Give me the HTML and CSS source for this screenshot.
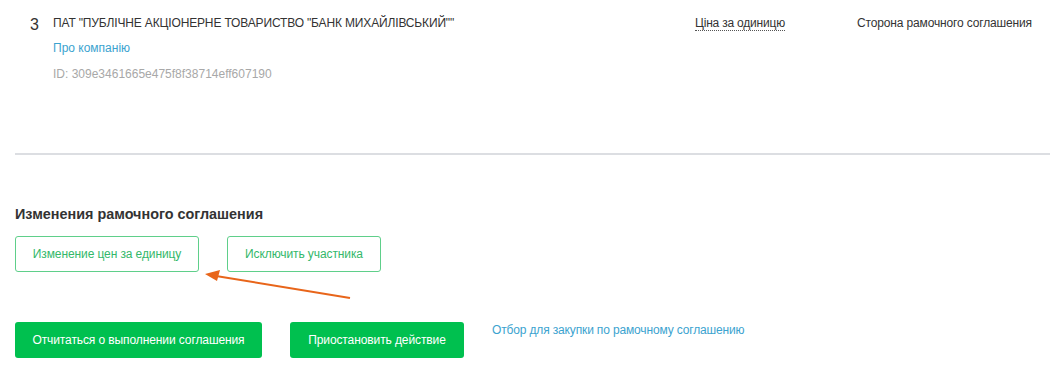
FILE: index.html
```html
<!doctype html>
<html lang="ru">
<head>
    <meta charset="UTF-8">
    <title>Рамочное соглашение</title>
    <link rel="stylesheet" href="styles.css">
</head>
<body>
<div class="page">
    <div class="party">
        <div class="num">3</div>
        <div class="info">
            <div class="name">ПАТ "ПУБЛІЧНЕ АКЦІОНЕРНЕ ТОВАРИСТВО "БАНК МИХАЙЛІВСЬКИЙ""</div>
            <a class="link about" href="#">Про компанію</a>
            <div class="id">ID: 309e3461665e475f8f38714eff607190</div>
        </div>
        <div class="price"><span class="dotted">Ціна за одиницю</span></div>
        <div class="role">Сторона рамочного соглашения</div>
    </div>
    <hr class="divider">
    <div class="changes">
        <h3>Изменения рамочного соглашения</h3>
        <div class="btns">
            <button class="btn-outline btn-price">Изменение цен за единицу</button>
            <button class="btn-outline btn-exclude">Исключить участника</button>
        </div>
    </div>
    <div class="actions">
        <button class="btn-green btn-report">Отчитаться о выполнении соглашения</button>
        <button class="btn-green btn-stop">Приостановить действие</button>
        <a class="link select" href="#">Отбор для закупки по рамочному соглашению</a>
    </div>
    <svg class="arrow" width="160" height="40" viewBox="0 0 160 40">
        <line x1="150" y1="32" x2="16" y2="10" stroke="#e8651a" stroke-width="2"/>
        <polygon points="5,8 20,4 17,15" fill="#e8651a"/>
    </svg>
</div>
</body>
</html>
```

FILE: styles.css
```css
* {
    box-sizing: border-box;
}

body {
    margin: 0;
    font-family: "Liberation Sans", Arial, sans-serif;
    color: #333;
    background: #fff;
}

.page {
    position: relative;
    padding-left: 15px;
}

.party {
    display: flex;
    height: 153px;
    padding-top: 16px;
}

.num {
    width: 38px;
    padding-left: 15px;
    font-size: 16px;
    line-height: 18px;
    color: #333;
}

.info {
    display: flex;
    flex-direction: column;
    align-items: flex-start;
    width: 642px;
    font-size: 12px;
}

.name {
    line-height: 15px;
    letter-spacing: -0.15px;
    color: #333;
}

.link {
    color: #3ba3cf;
    text-decoration: none;
    font-size: 12px;
}

.about {
    margin-top: 9px;
    line-height: 16px;
}

.id {
    margin-top: 10px;
    line-height: 16px;
    color: #a8a8a8;
}

.price {
    width: 162px;
    font-size: 12px;
    line-height: 15px;
    letter-spacing: -0.2px;
}

.dotted {
    border-bottom: 1px dotted #555;
}

.role {
    font-size: 12px;
    line-height: 15px;
    letter-spacing: -0.15px;
}

.divider {
    margin: 0;
    border: none;
    border-top: 2px solid #dcdee2;
}

.changes {
    padding-top: 50px;
}

.changes h3 {
    margin: 0 0 13px;
    font-size: 14.4px;
    line-height: 18px;
    font-weight: bold;
    color: #333;
}

.btns {
    display: flex;
    gap: 28px;
}

.btn-outline {
    height: 36px;
    border: 1px solid #5fcf8a;
    border-radius: 3px;
    background: #fff;
    color: #33b86a;
    font-family: inherit;
    font-size: 12px;
    letter-spacing: -0.1px;
}

.btn-price {
    width: 184px;
}

.btn-exclude {
    width: 154px;
}

.actions {
    display: flex;
    align-items: flex-start;
    gap: 28px;
    padding-top: 50px;
}

.btn-green {
    height: 36px;
    border: none;
    border-radius: 3px;
    background: #00c04f;
    color: #fff;
    font-family: inherit;
    font-size: 12px;
    letter-spacing: -0.1px;
}

.btn-report {
    width: 247px;
}

.btn-stop {
    width: 174px;
}

.select {
    margin-top: 1px;
    letter-spacing: -0.15px;
}

.arrow {
    position: absolute;
    left: 200px;
    top: 266px;
}
```
